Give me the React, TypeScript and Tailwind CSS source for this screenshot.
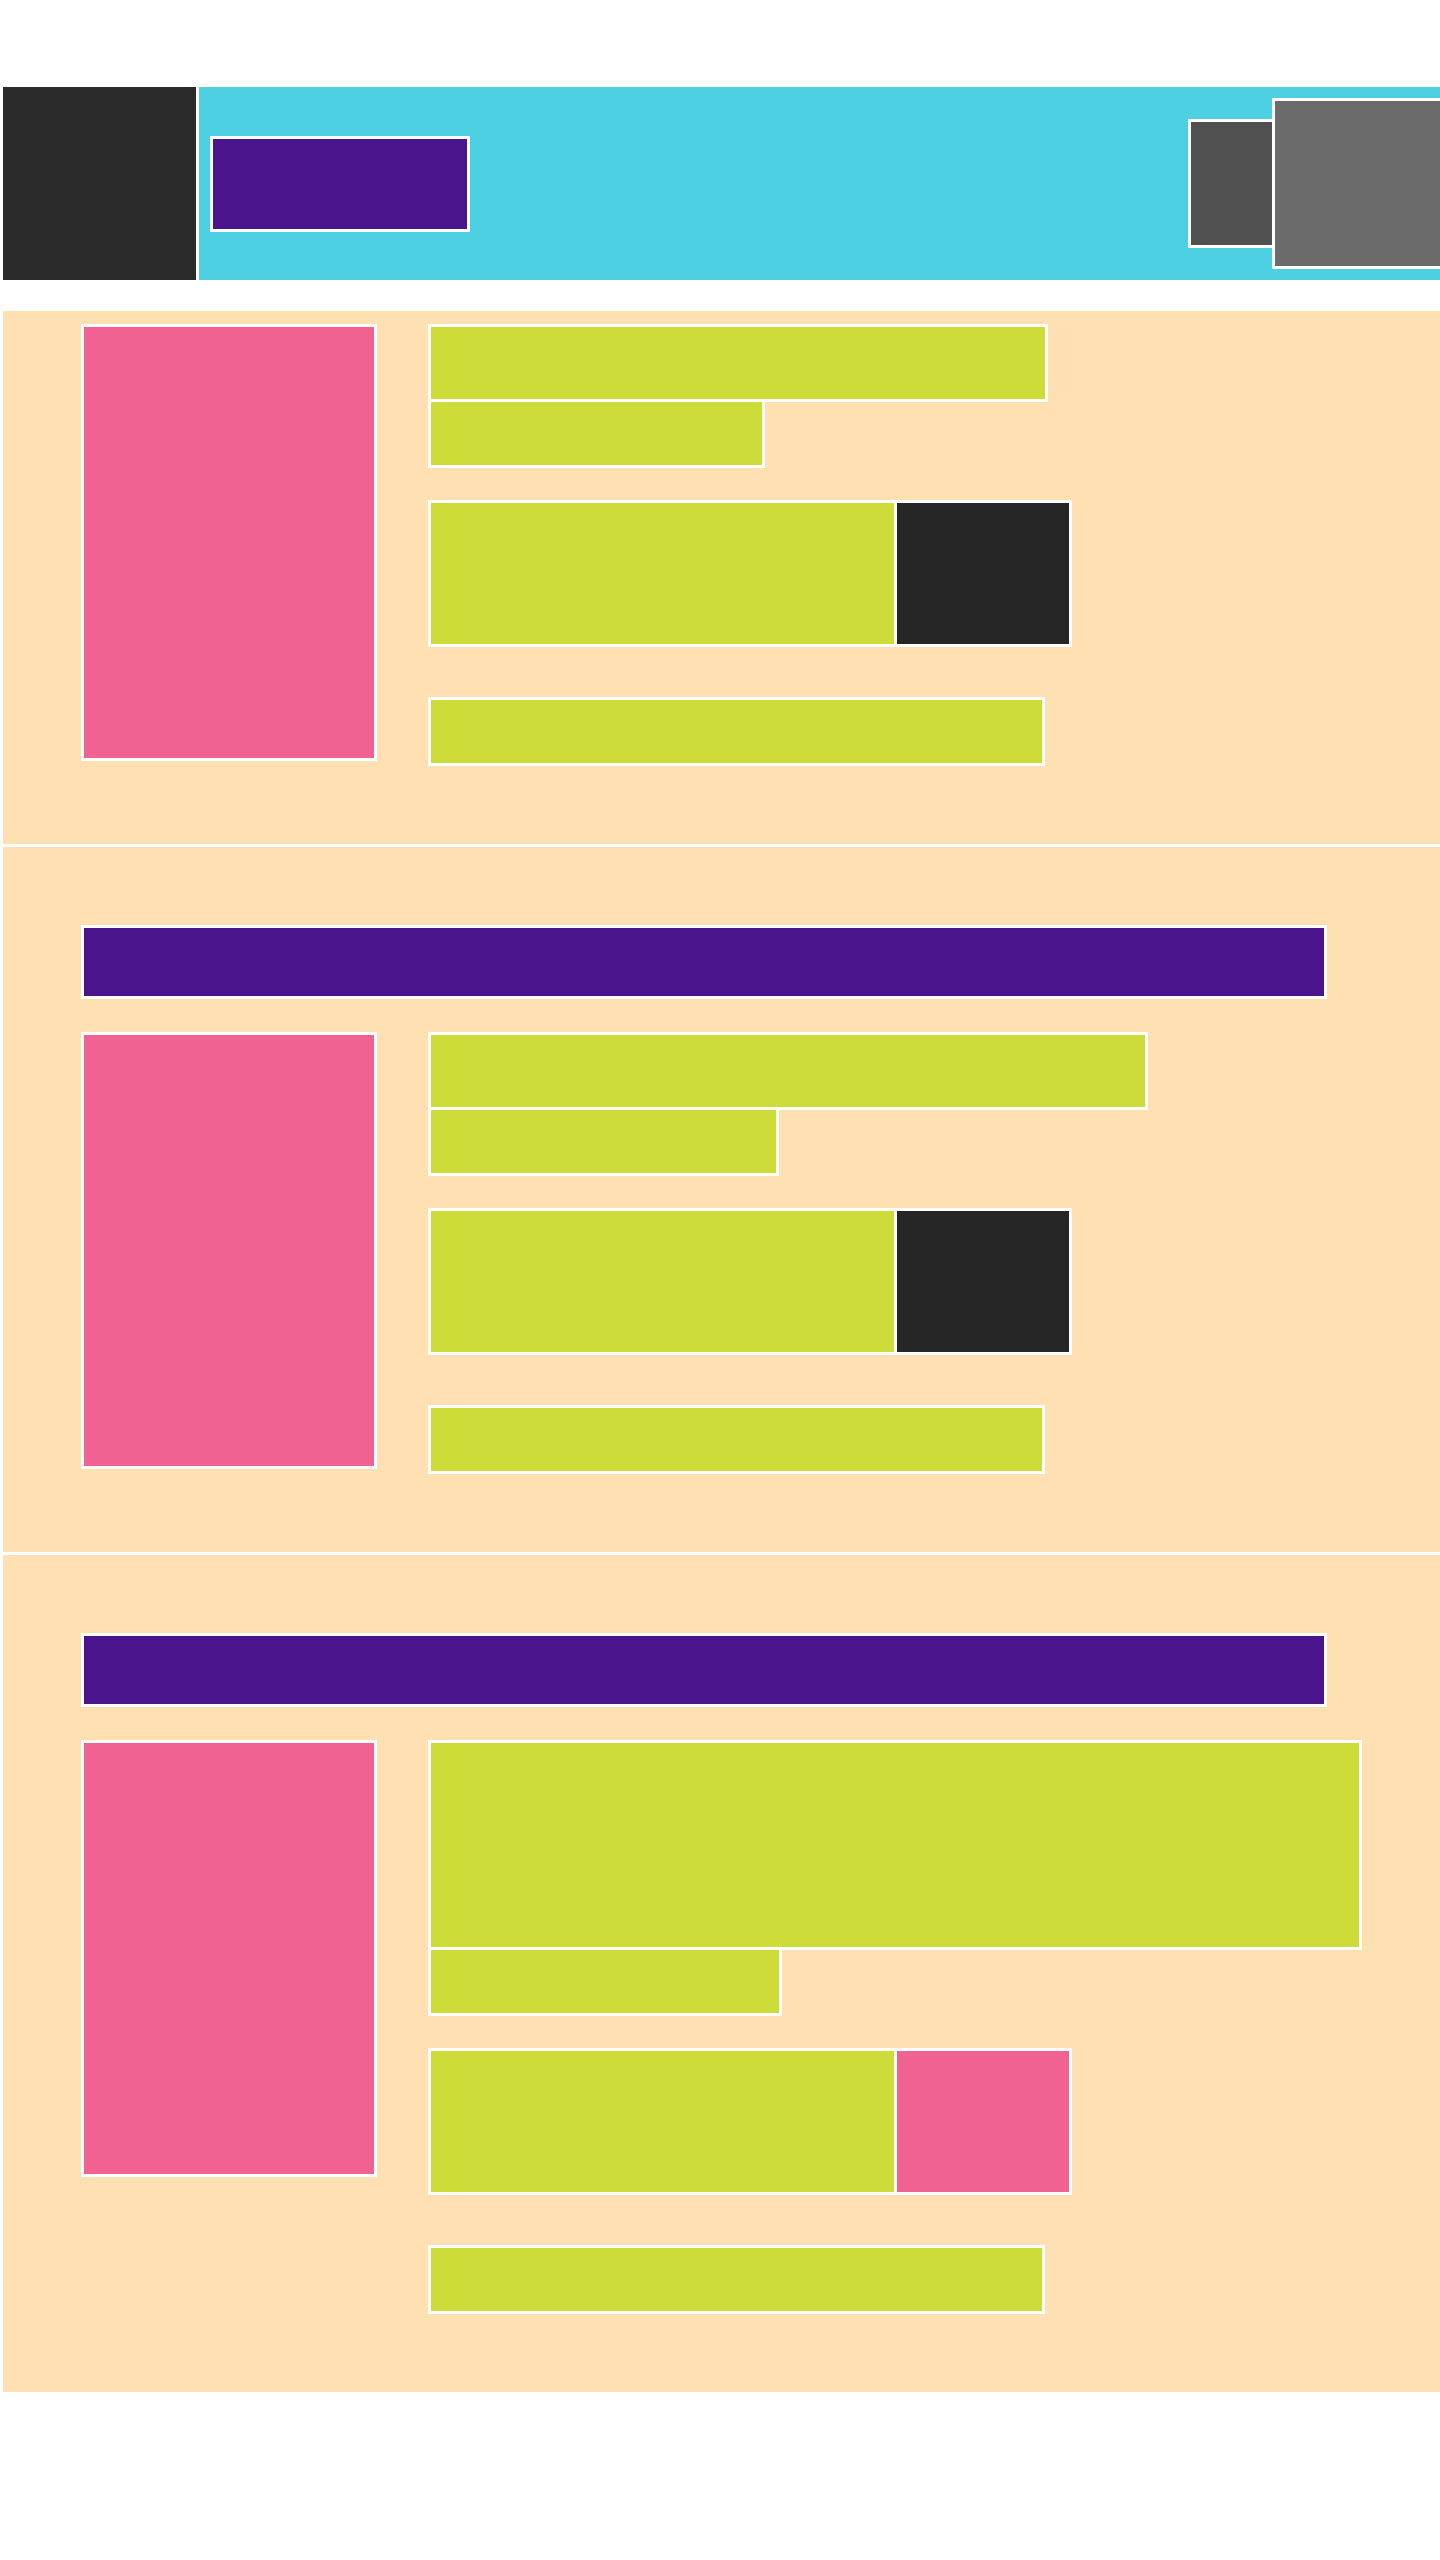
const listings = [
  { banner: false, titleW: 'w-[620px]', titleH: 'h-[78px]', metaW: 'w-[337px]', badge: 'bg-[#262626]' },
  { banner: true, titleW: 'w-[720px]', titleH: 'h-[78px]', metaW: 'w-[351px]', badge: 'bg-[#262626]' },
  { banner: true, titleW: 'w-[934px]', titleH: 'h-[210px]', metaW: 'w-[354px]', badge: 'bg-[#f06292]' },
];

function Header() {
  return (
    <header className="mt-[87px] flex h-[193px] gap-[3px]">
      <div className="w-[193px] shrink-0 bg-[#2b2b2b]" />
      <div className="flex flex-1 items-center overflow-hidden bg-[#4dd0e1] pl-[11px]">
        <div className="h-[96px] w-[260px] shrink-0 border-[3px] border-white bg-[#4a148c]" />
        <div className="ml-auto h-[129px] w-[87px] shrink-0 border-[3px] border-white bg-[#505050]" />
        <div className="-ml-[3px] -mr-[3px] h-[171px] w-[171px] shrink-0 border-[3px] border-white bg-[#6b6b6b]" />
      </div>
    </header>
  );
}

function Listing({ item }: { item: (typeof listings)[number] }) {
  return (
    <section className={`bg-[#ffe0b2] pb-[78px] pl-[78px] ${item.banner ? 'pt-[78px]' : 'pt-[13px]'}`}>
      {item.banner && (
        <div className="mb-[33px] h-[74px] w-[1246px] border-[3px] border-white bg-[#4a148c]" />
      )}
      <div className="flex items-start gap-[51px]">
        <div className="h-[437px] w-[296px] shrink-0 border-[3px] border-white bg-[#f06292]" />
        <div className="flex flex-col">
          <div className={`${item.titleH} ${item.titleW} border-[3px] border-white bg-[#cddc39]`} />
          <div className={`h-[66px] ${item.metaW} border-[3px] border-t-0 border-white bg-[#cddc39]`} />

          {/* price + badge */}
          <div className="mt-[32px] flex h-[147px] w-[644px] border-[3px] border-white">
            <div className="w-[463px] bg-[#cddc39]" />
            <div className={`flex-1 border-l-[3px] border-white ${item.badge}`} />
          </div>

          <div className="mt-[50px] h-[69px] w-[617px] border-[3px] border-white bg-[#cddc39]" />
        </div>
      </div>
    </section>
  );
}

export default function App() {
  return (
    <div className="min-h-[2560px] bg-white pl-[3px]">
      <Header />
      <main className="mt-[31px] flex flex-col gap-[3px]">
        {listings.map((item, i) => (
          <Listing key={i} item={item} />
        ))}
      </main>
    </div>
  );
}
